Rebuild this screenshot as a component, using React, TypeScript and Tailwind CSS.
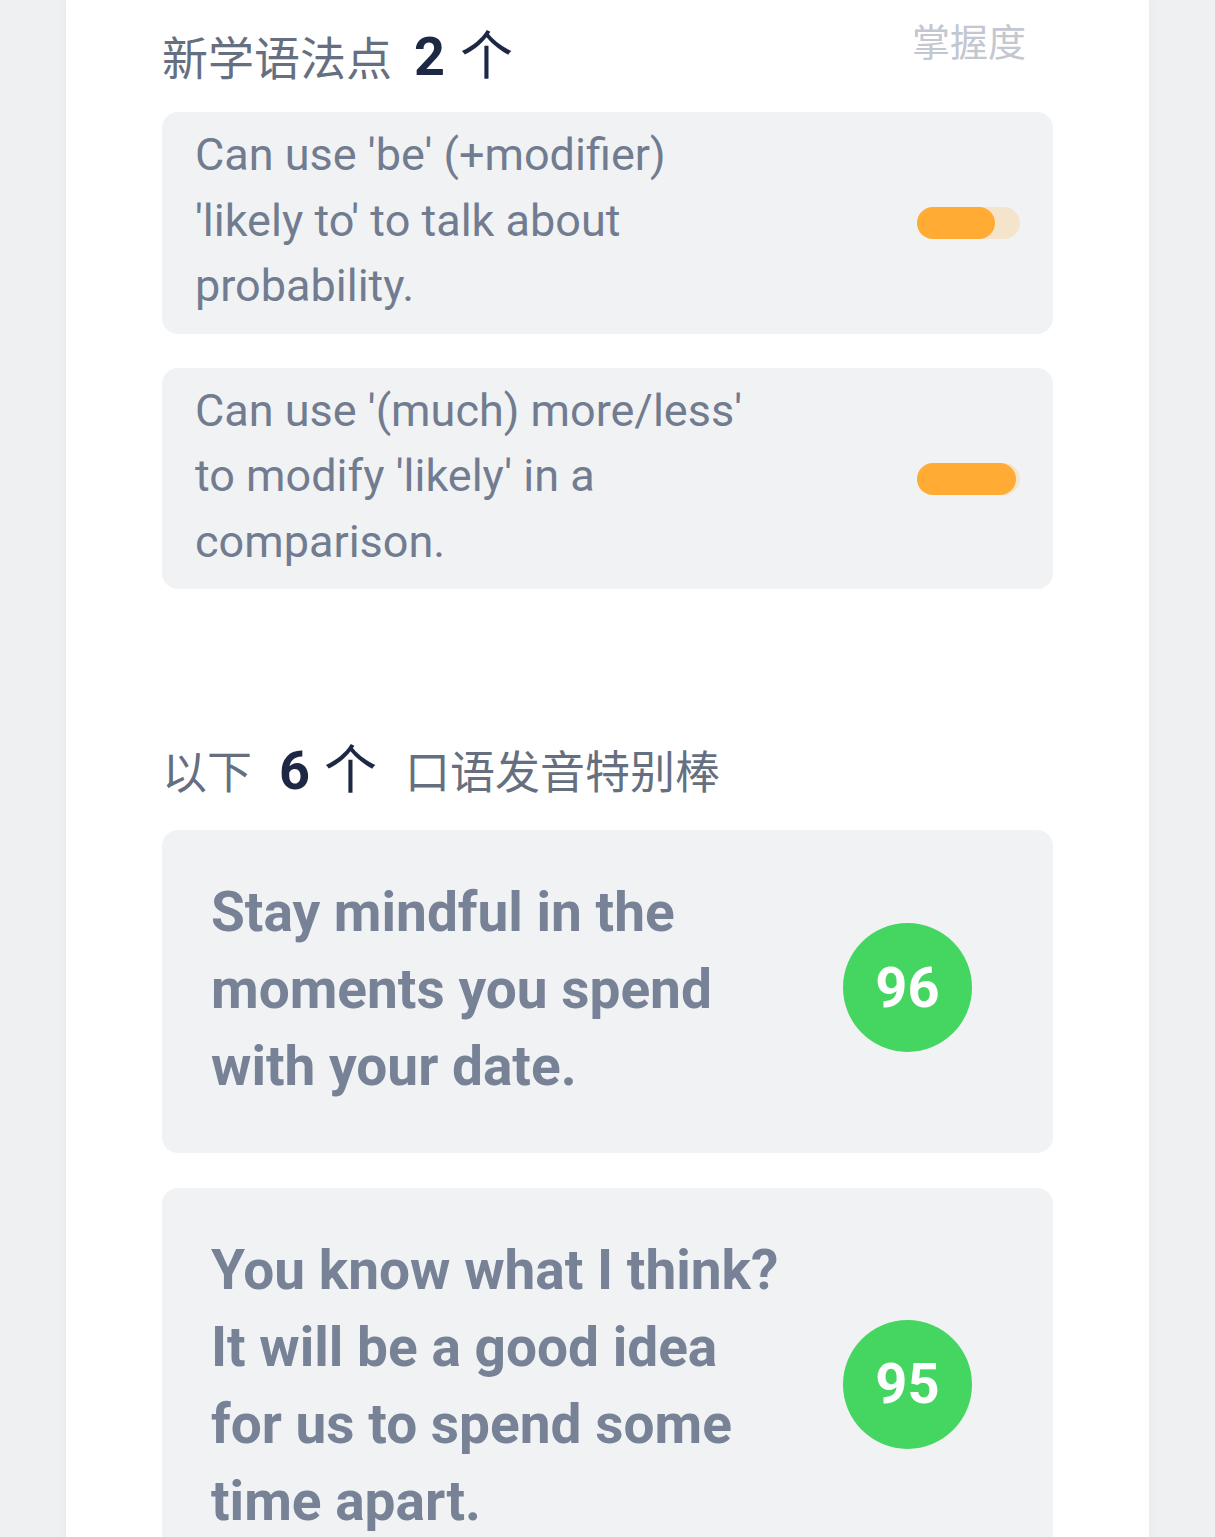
import React from 'react';

const grammarPoints = [
  { text: "Can use 'be' (+modifier) 'likely to' to talk about probability.", mastery: 76 },
  { text: "Can use '(much) more/less' to modify 'likely' in a comparison.", mastery: 96 },
];

const sentences = [
  { text: 'Stay mindful in the moments you spend with your date.', score: 96 },
  { text: 'You know what I think? It will be a good idea for us to spend some time apart.', score: 95 },
];

const latin = { fontFamily: 'Roboto, "Noto Sans CJK SC", sans-serif' };
const cjk = { fontFamily: '"Noto Sans CJK SC", Roboto, sans-serif' };

function MasteryBar({ value }: { value: number }) {
  return (
    <div className="mt-[6px] h-[32px] w-[103px] shrink-0 rounded-full bg-[#f5e4cc]">
      <div className="h-full rounded-full bg-[#ffab34]" style={{ width: `${value}%` }} />
    </div>
  );
}

function GrammarCard({ text, mastery }: { text: string; mastery: number }) {
  return (
    <div className="flex items-center justify-between rounded-[16px] bg-[#f1f2f4] pb-[15px] pl-[33px] pr-[33px] pt-[10px]">
      <p className="w-[575px] text-[45px] leading-[65.5px] text-[#717c90]" style={latin}>
        {text}
      </p>
      <MasteryBar value={mastery} />
    </div>
  );
}

function SentenceCard({ text, score }: { text: string; score: number }) {
  return (
    <div className="flex items-center rounded-[16px] bg-[#f1f2f4] pb-[48px] pl-[49px] pr-[81px] pt-[44px]">
      <p className="flex-1 pr-[60px] text-[55px] font-bold leading-[77px] text-[#778297]" style={latin}>
        {text}
      </p>
      <div
        className="mb-[4px] flex h-[129px] w-[129px] shrink-0 items-center justify-center rounded-full bg-[#44d660] text-[56px] font-bold text-white"
        style={latin}
      >
        {score}
      </div>
    </div>
  );
}

export default function App() {
  return (
    <div className="min-h-screen bg-[#eff0f2] px-[66px]">
      <div className="min-h-screen bg-white px-[96px] pb-[40px] shadow-[0_0_12px_rgba(0,0,0,0.04)]">
        {/* grammar header */}
        <div className="flex items-start justify-between pt-[22px]">
          <div className="flex items-baseline text-[#666f80]" style={cjk}>
            <span className="text-[46px] leading-[60px]">新学语法点</span>
            <span className="ml-[22px] text-[54px] font-bold leading-[60px] text-[#1d2844]" style={latin}>
              2
            </span>
            <span className="ml-[15px] text-[53px] leading-[60px] text-[#1d2844]">个</span>
          </div>
          <span className="-mt-[2px] mr-[27px] text-[38px] leading-[40px] text-[#c3c7d0]" style={cjk}>
            掌握度
          </span>
        </div>

        <div className="mt-[25px] flex flex-col gap-[34px]">
          {grammarPoints.map((g) => (
            <GrammarCard key={g.text} text={g.text} mastery={g.mastery} />
          ))}
        </div>

        {/* pronunciation header */}
        <div className="mt-[147px] flex items-baseline text-[#666f80]" style={cjk}>
          <span className="text-[45px] leading-[60px]">以下</span>
          <span className="ml-[27px] text-[54px] font-bold leading-[60px] text-[#1d2844]" style={latin}>
            6
          </span>
          <span className="ml-[14px] text-[53px] leading-[60px] text-[#1d2844]">个</span>
          <span className="ml-[28px] text-[45px] leading-[60px]">口语发音特别棒</span>
        </div>

        <div className="mt-[29px] flex flex-col gap-[35px]">
          {sentences.map((s) => (
            <SentenceCard key={s.text} text={s.text} score={s.score} />
          ))}
        </div>
      </div>
    </div>
  );
}
